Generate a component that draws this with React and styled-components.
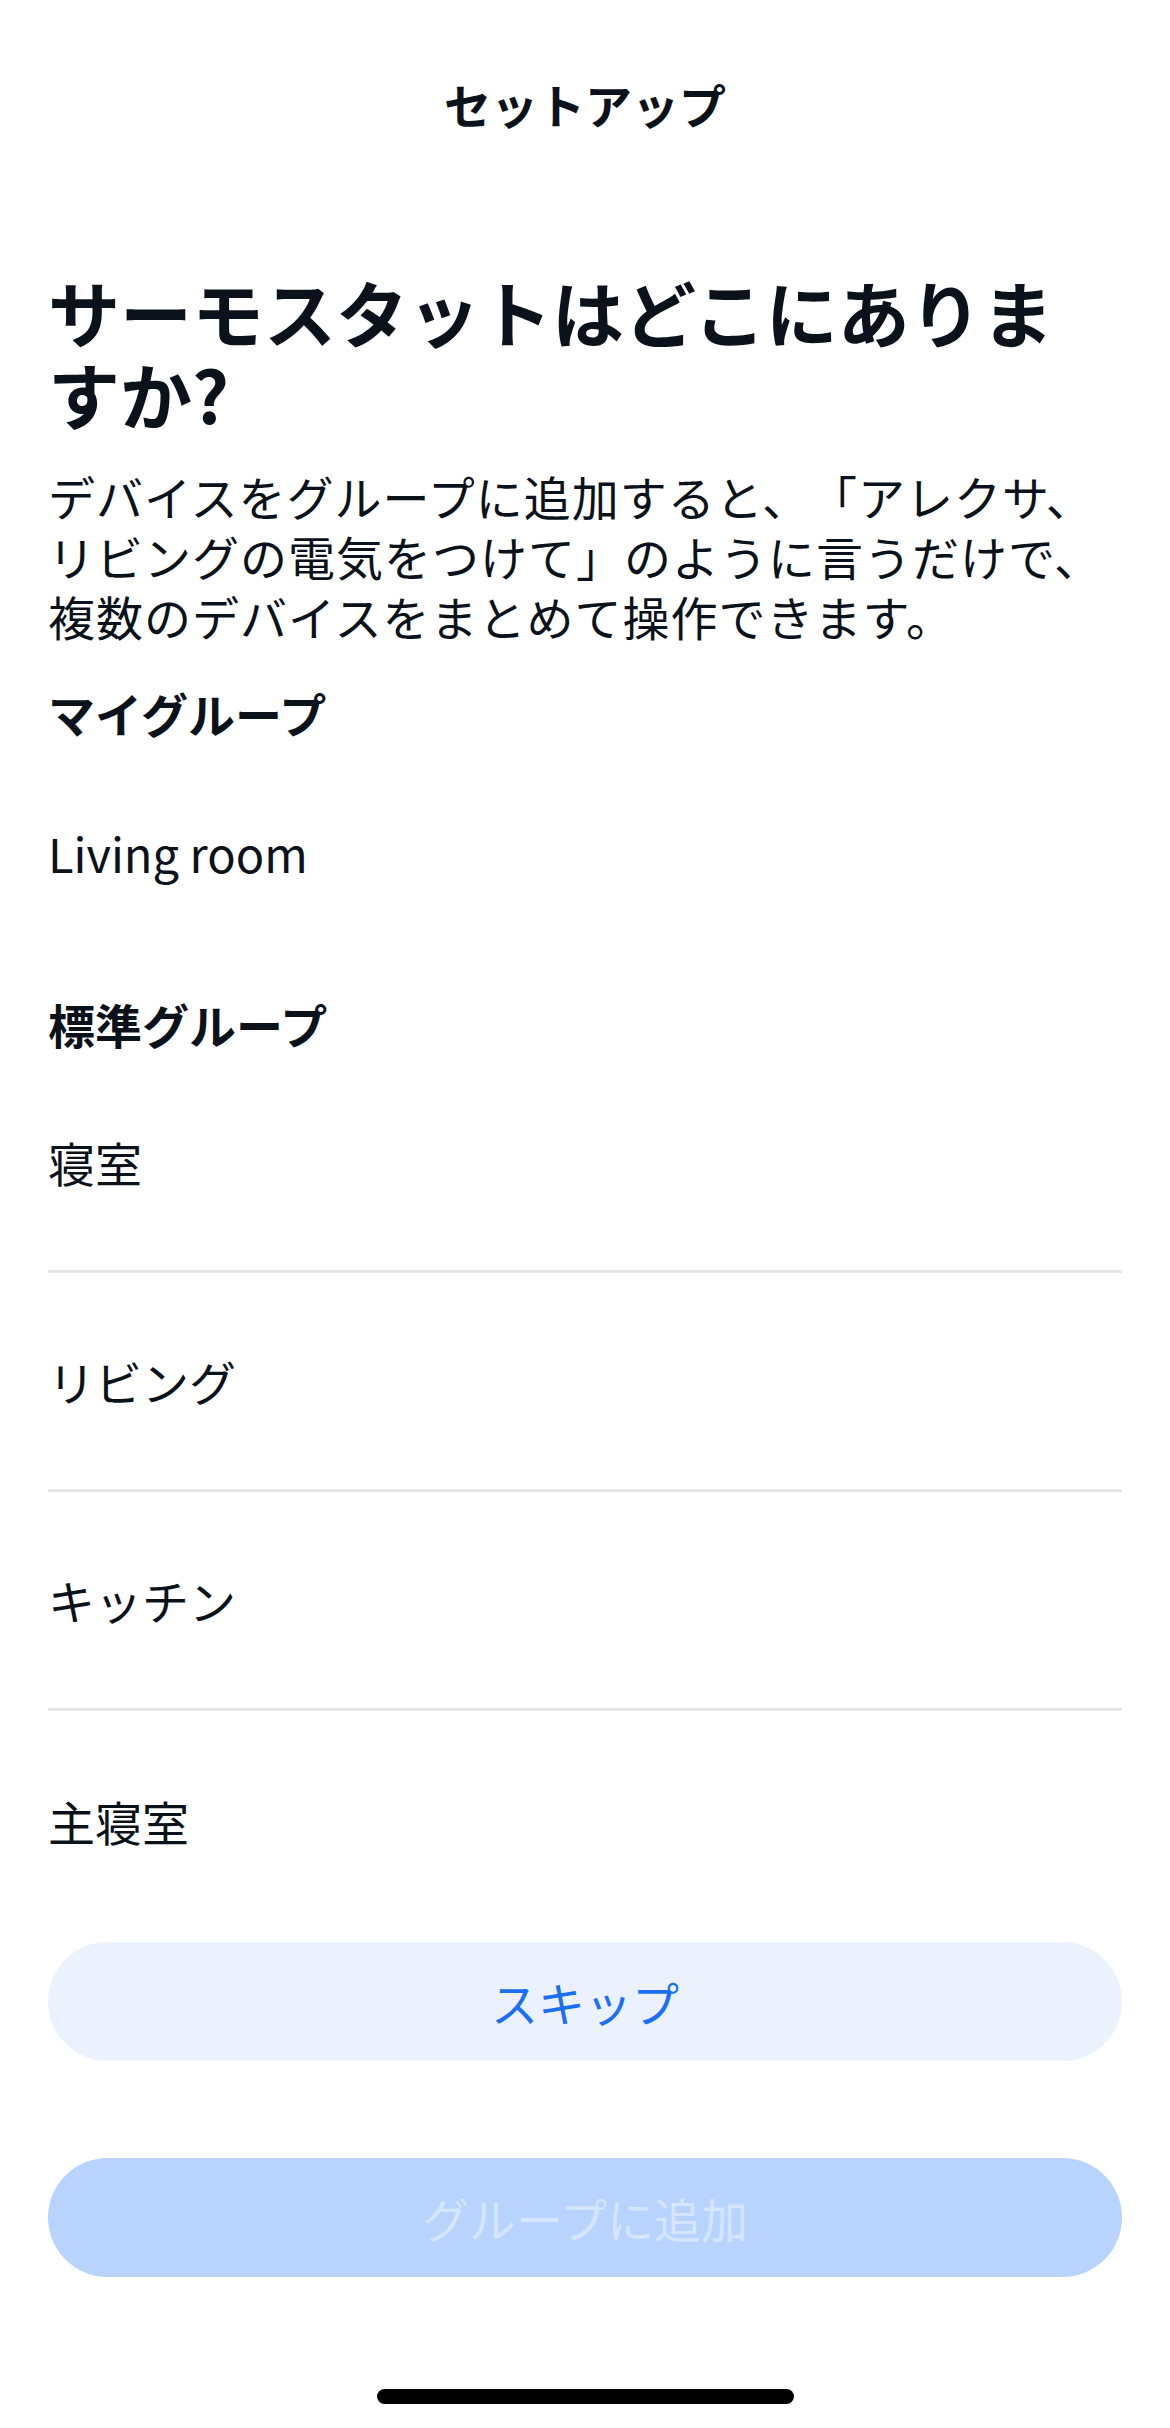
import React from "react";
import styled, { createGlobalStyle } from "styled-components";

const GlobalStyle = createGlobalStyle`
  html, body {
    margin: 0;
    padding: 0;
    background: #ffffff;
  }
  body {
    font-family: "Noto Sans CJK JP", "Noto Sans", sans-serif;
    color: #0b121b;
    text-spacing-trim: space-all;
    -webkit-font-smoothing: antialiased;
  }
`;

const Screen = styled.div`
  width: 1170px;
  min-height: 2428px;
  box-sizing: border-box;
  padding: 0 48px;
  display: flex;
  flex-direction: column;
  background: #ffffff;
`;

const NavBar = styled.header`
  height: 208px;
  display: flex;
  align-items: center;
  justify-content: center;
`;

const NavTitle = styled.h1`
  margin: 0;
  font-size: 47px;
  line-height: 60px;
  font-weight: 700;
  color: #0b121b;
`;

const Heading = styled.h2`
  margin: 62px 0 0;
  font-size: 72px;
  line-height: 82px;
  font-weight: 700;
  color: #0b121b;
`;

const Description = styled.p`
  margin: 32px 0 0;
  max-width: 1056px;
  font-size: 47px;
  line-height: 60px;
  letter-spacing: 1px;
  font-weight: 400;
  color: #0b121b;
  text-spacing-trim: space-all;
`;

const SectionTitle = styled.h3`
  margin: ${(p) => p.$gap}px 0 0;
  font-size: 47px;
  line-height: 60px;
  font-weight: 700;
  color: #0b121b;
`;

const List = styled.ul`
  list-style: none;
  margin: 0;
  padding: 0;
`;

const Row = styled.li`
  height: ${(p) => (p.$divider ? 216 : 219)}px;
  display: flex;
  align-items: center;
  font-size: 47px;
  line-height: 60px;
  font-weight: 400;
  color: #0b121b;
  border-bottom: ${(p) => (p.$divider ? "3px solid #e6e6e6" : "none")};
`;

const Actions = styled.div`
  display: flex;
  flex-direction: column;
  gap: 97px;
  margin-top: 12px;
`;

const PillButton = styled.button`
  height: 119px;
  width: 100%;
  border: none;
  border-radius: 60px;
  font-family: "Noto Sans CJK JP", "Noto Sans", sans-serif;
  font-size: 47px;
  font-weight: 400;
  background: ${(p) => (p.$variant === "primary" ? "#b8d4fe" : "#ebf2fe")};
  color: ${(p) => (p.$variant === "primary" ? "#d4e5fd" : "#1a6ff6")};
  display: flex;
  align-items: center;
  justify-content: center;
  padding: 0;
`;

const HomeBar = styled.div`
  align-self: center;
  width: 417px;
  height: 15px;
  border-radius: 8px;
  background: #000000;
  margin-top: 112px;
`;

const standardGroups = ["寝室", "リビング", "キッチン", "主寝室"];

export default function App() {
  return (
    <>
      <GlobalStyle />
      <Screen>
        <NavBar>
          <NavTitle>セットアップ</NavTitle>
        </NavBar>
        <Heading>サーモスタットはどこにありますか?</Heading>
        <Description>
          デバイスをグループに追加すると、「アレクサ、リビングの電気をつけて」のように言うだけで、複数のデバイスをまとめて操作できます。
        </Description>
        <SectionTitle $gap={37}>マイグループ</SectionTitle>
        <List>
          <Row>Living room</Row>
        </List>
        <SectionTitle $gap={32}>標準グループ</SectionTitle>
        <List>
          {standardGroups.map((name, i) => (
            <Row key={name} $divider={i < standardGroups.length - 1}>
              {name}
            </Row>
          ))}
        </List>
        <Actions>
          <PillButton>スキップ</PillButton>
          <PillButton $variant="primary" disabled>
            グループに追加
          </PillButton>
        </Actions>
        <HomeBar />
      </Screen>
    </>
  );
}
